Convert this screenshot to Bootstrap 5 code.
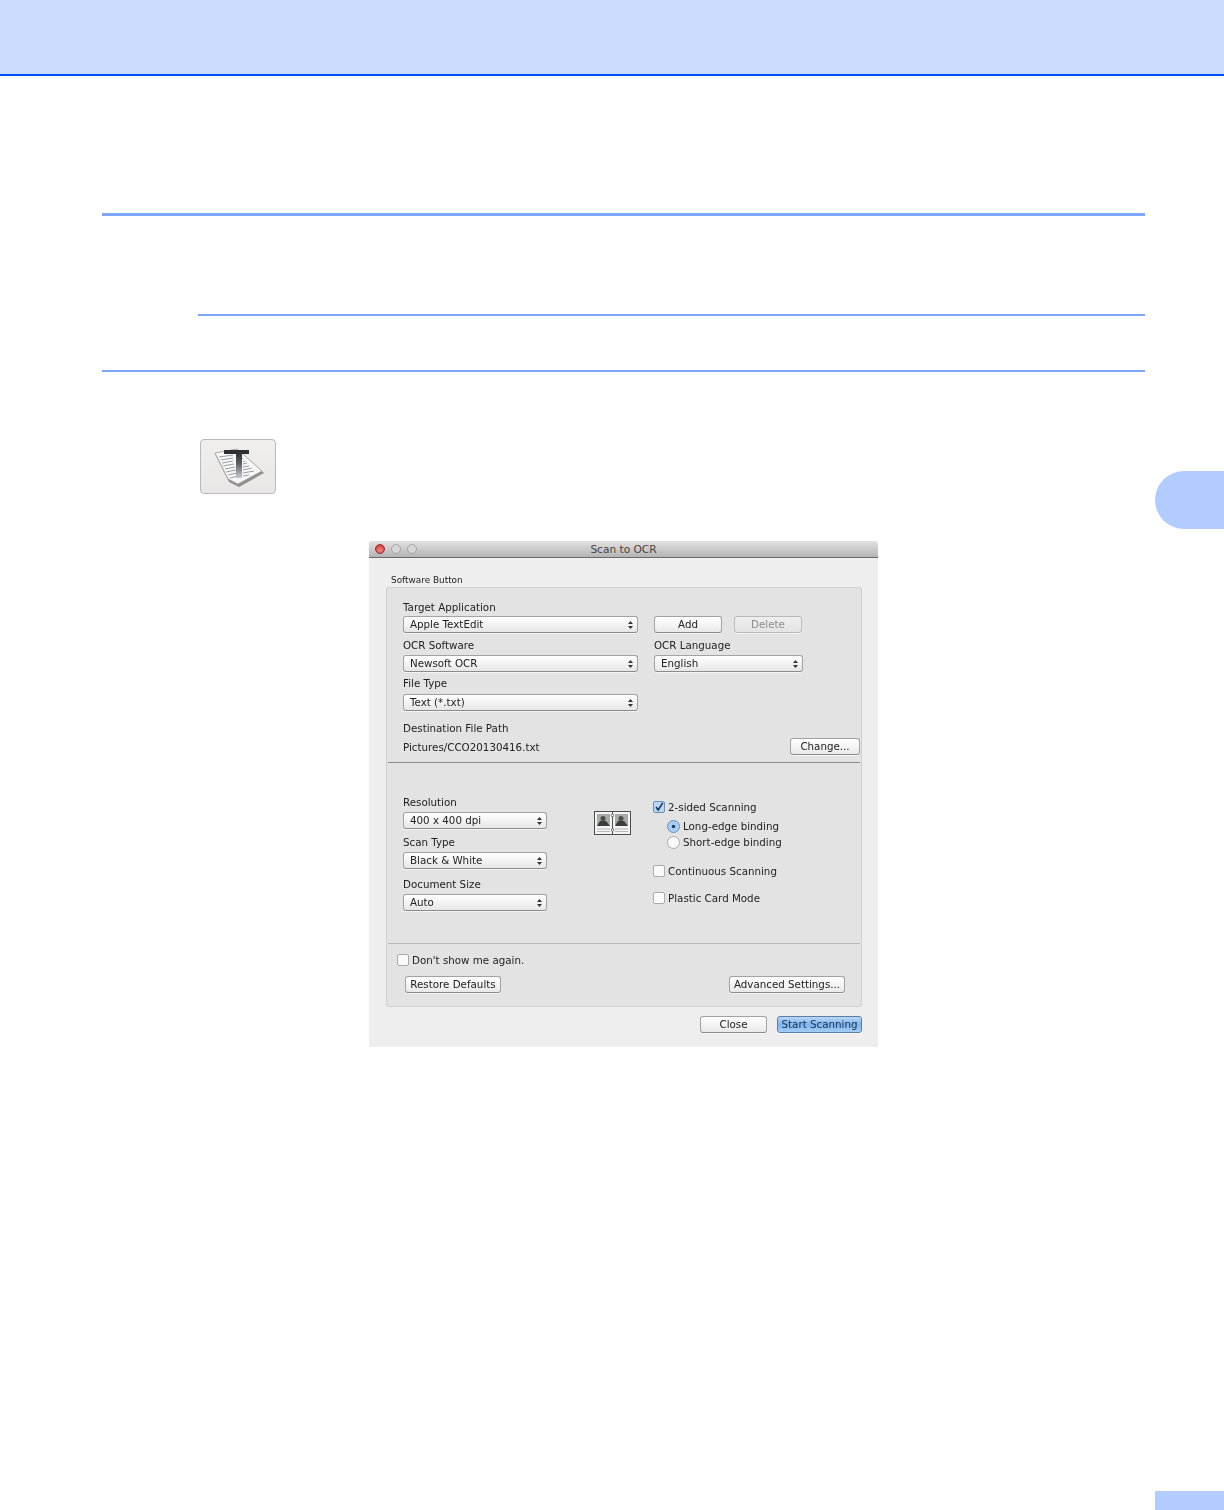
<!DOCTYPE html>
<html lang="en">
<head>
<meta charset="utf-8">
<title>Scan to OCR</title>
<link href="https://cdn.jsdelivr.net/npm/bootstrap@5.3.0/dist/css/bootstrap.min.css" rel="stylesheet">
<style>
html,body{background:#fff;margin:0}
.pg{position:relative;height:1510px;width:1224px;overflow:hidden}
.top-band{height:76px;background:#cbdcff;border-bottom:2px solid #0050ff}
.rule-a{height:3px;background:#7ea8ff;margin:137px 79px 0 102px}
.rule-b{height:2px;background:#7ea8ff;margin:98px 79px 0 198px}
.rule-c{height:2px;background:#7ea8ff;margin:54px 79px 0 102px}
.tool-icon{width:76px;height:55px;margin:67px 0 0 200px;background:linear-gradient(#f1eeee,#e9e6e6);border:1px solid #bdb8b8;border-radius:4px;overflow:hidden}
.tool-icon svg{display:block}
.side-tab{position:absolute;left:1155px;top:471px;width:69px;height:58px;background:#b3ccff;border-radius:29px 0 0 29px}
.page-tab{position:absolute;left:1155px;top:1491px;width:69px;height:19px;background:#b3ccff}

.dlg{width:509px;height:506px;margin:47px 0 0 369px;background:#eeeeee;font-family:"DejaVu Sans",sans-serif;font-size:10.3px;color:#222;filter:blur(.3px);border-radius:3px 3px 0 0;overflow:hidden}
.dlg-title{height:17px;line-height:16px;background:linear-gradient(#e2e2e2,#b4b4b4);border-bottom:1px solid #6a6a6a;text-align:center;color:#444;font-size:10.6px;position:relative}
.lights{left:6px;top:3px;position:absolute;gap:6px}
.light{width:10px;height:10px;border-radius:50%;background:#d5d5d5;border:1px solid #a5a5a5}
.light-red{background:radial-gradient(circle at 50% 70%,#f08a80,#c92b2b);border-color:#9d2a2a}
.group-name{height:13px;line-height:13px;margin:16px 0 0 22px;font-size:8.9px}
.panel{width:476px;height:420px;margin:0 0 0 17px;background:#e3e3e3;border:1px solid #cfcfcf;border-radius:3px;padding:0 1px}
.sec-a{padding:12px 0 0 15px;height:174px}
.sec-b{height:180px;padding-left:15px}
.sec-c{padding:9px 0 0 9px}
.line{height:1px;background:#8e8e8e;margin:0}
.line-soft{background:#b9b9b9}
.cap{height:14px;line-height:14px;white-space:nowrap}
.dlg select.form-select,.dlg .btn{font-size:10.3px;line-height:15px;color:#222;border:1px solid #a2a2a2;border-bottom-color:#8b8b8b;border-radius:3px;height:17px;padding:0;box-shadow:0 1px 0 rgba(255,255,255,.6);font-family:inherit}
.dlg select.form-select{padding:0 16px 0 6px;background-color:#fff;background-image:url("data:image/svg+xml,%3Csvg xmlns='http://www.w3.org/2000/svg' width='7' height='10'%3E%3Cpath d='M3.5 1 1 4h5zM3.5 9 1 6h5z' fill='%23333'/%3E%3C/svg%3E"),linear-gradient(#fff,#f3f3f3 50%,#e6e6e6);background-repeat:no-repeat;background-position:right 3px center,0 0;background-size:7px 10px,100% 100%}
.dlg .btn{background:linear-gradient(#fff,#f4f4f4 50%,#e9e9e9);text-align:center}
.dlg .btn:disabled{opacity:1;color:#8d8d8d;border-color:#b9b9b9;background:linear-gradient(#eeeeee,#e4e4e4)}
.dlg .btn.go{background:linear-gradient(#b9d7f6,#7fb4ee 50%,#a3cdf5);border-color:#5a7ea8;color:#14324f}
.w-235{width:235px}.w-149{width:149px}.w-144{width:144px}
.w-68{width:68px}.w-70{width:70px}.w-96{width:96px}.w-116{width:116px}.w-67{width:67px}.w-85{width:85px}
.g2{margin-top:2px}.g3{margin-top:3px}.g4{margin-top:4px}.g5{margin-top:5px}.g6{margin-top:6px}.g8{margin-top:8px}.g9{margin-top:9px}.g10{margin-top:10px}
.after-sel{margin-left:16px}.after-add{margin-left:12px}
.col-left{width:144px;padding-top:32px}
.col-mid{width:48px;margin-left:44px;padding-top:48px}
.col-right{margin-left:14px;padding-top:37px}
.opt{height:14px;line-height:14px;white-space:nowrap}
.opt .form-check-input{margin:0 3px 0 0;width:12px;height:12px;border:1px solid #ababab;border-radius:2px;background-color:#fafafa;flex:none}
.opt .form-check-input:checked{background-color:#bcd6f2;border-color:#6f8fb5;background-image:url("data:image/svg+xml,%3Csvg xmlns='http://www.w3.org/2000/svg' viewBox='0 0 12 12'%3E%3Cpath d='M2.5 6 5 9.5 10.5 1' fill='none' stroke='%23123a66' stroke-width='2'/%3E%3C/svg%3E");background-size:100% 100%}
.opt .form-check-input[type=radio]{border-radius:50%;width:13px;height:13px}
.opt .form-check-input[type=radio]:checked{background-color:#a9cdf3;background-image:url("data:image/svg+xml,%3Csvg xmlns='http://www.w3.org/2000/svg' viewBox='0 0 13 13'%3E%3Ccircle cx='6.5' cy='6.5' r='2' fill='%23173a60'/%3E%3C/svg%3E")}
.sub-opt{margin-left:14px}
.g15{margin-top:15px}.g13{margin-top:13px}
.sec-c-buttons{margin:9px 0 0 8px;width:440px}
.dlg-foot{margin:9px 16px 0 0;gap:10px}
</style>
</head>
<body>
<div class="pg">
  <div class="top-band"></div>
  <div class="rule-a"></div>
  <div class="rule-b"></div>
  <div class="rule-c"></div>
  <div class="tool-icon">
    <svg width="74" height="53" viewBox="0 0 74 53" aria-hidden="true">
      <defs>
        <linearGradient id="tg" x1="0" y1="0" x2="0" y2="1"><stop offset="0" stop-color="#2c2c30"/><stop offset=".45" stop-color="#5d6068"/><stop offset="1" stop-color="#c8cbd2"/></linearGradient>
      </defs>
      <path d="M14 14 37 10 63 33 38 47 28 42Z" fill="#8f8f8f"/>
      <path d="M14 13 36 9 61 31 37 44 27 39Z" fill="#f7f7f7" stroke="#9a9a9a" stroke-width=".8"/>
      <g stroke="#9c9ea3" stroke-width="1" fill="none">
        <path d="M18 17 32 15M20 20 32 18M21 23 32 21M22 26 33 24M24 29 34 27M25 32 35 30M27 35 36 33M29 38 37 36"/>
        <path d="M42 18 41 19M44 21 42 22M46 23 42 24M48 26 42 27M51 28 42 30M53 31 42 33M48 35 42 36"/>
      </g>
      <rect x="23" y="10" width="25" height="4" fill="#2f2f33"/>
      <rect x="35" y="12" width="6" height="26" fill="url(#tg)"/>
    </svg>
  </div>
  <div class="dlg">
    <div class="dlg-title">
      <div class="lights d-flex"><span class="light light-red"></span><span class="light"></span><span class="light"></span></div>
      Scan to OCR
    </div>
    <div class="group-name">Software Button</div>
    <div class="panel">
      <div class="sec-a">
        <div class="cap">Target Application</div>
        <div class="d-flex g2">
          <select class="form-select w-235"><option>Apple TextEdit</option></select>
          <button class="btn w-68 after-sel" type="button">Add</button>
          <button class="btn w-68 after-add" type="button" disabled>Delete</button>
        </div>
        <div class="d-flex g5">
          <div class="cap w-235">OCR Software</div>
          <div class="cap after-sel">OCR Language</div>
        </div>
        <div class="d-flex g3">
          <select class="form-select w-235"><option>Newsoft OCR</option></select>
          <select class="form-select w-149 after-sel"><option>English</option></select>
        </div>
        <div class="cap g4">File Type</div>
        <div class="g4"><select class="form-select w-235"><option>Text (*.txt)</option></select></div>
        <div class="cap g10">Destination File Path</div>
        <div class="d-flex justify-content-between align-items-center g3 w-436">
          <span class="cap">Pictures/CCO20130416.txt</span>
          <button class="btn w-70 change-btn" type="button">Change...</button>
        </div>
      </div>
      <div class="line"></div>
      <div class="sec-b d-flex">
        <div class="col-left">
          <div class="cap">Resolution</div>
          <select class="form-select w-144 g3"><option>400 x 400 dpi</option></select>
          <div class="cap g6">Scan Type</div>
          <select class="form-select w-144 g3"><option>Black &amp; White</option></select>
          <div class="cap g8">Document Size</div>
          <select class="form-select w-144 g3"><option>Auto</option></select>
        </div>
        <div class="col-mid">
          <svg width="42" height="25" viewBox="0 0 42 25" aria-hidden="true">
            <rect x="3.5" y=".5" width="18" height="23" fill="#f4f4f4" stroke="#4d4d4d"/>
            <rect x="21.5" y=".5" width="18" height="23" fill="#f4f4f4" stroke="#4d4d4d"/>
            <rect x="6" y="3" width="13" height="12" fill="#a7aaa6"/>
            <rect x="24" y="3" width="13" height="12" fill="#a7aaa6"/>
            <circle cx="12" cy="7.5" r="2.5" fill="#4c4c4c"/><circle cx="30" cy="7.5" r="2.5" fill="#4c4c4c"/>
            <path d="M6 15 9 10h6l4 5Z" fill="#3d3d3d"/><path d="M24 15 27 10h6l4 5Z" fill="#3d3d3d"/>
            <path d="M6 18h13M6 20.500h13M24 18h13M24 20.500h13" stroke="#b5b5b5"/>
            <circle cx="21.500" cy="4.500" r="1.300" fill="#fff" stroke="#444" stroke-width=".7"/><circle cx="21.500" cy="19" r="1.300" fill="#fff" stroke="#444" stroke-width=".7"/>
          </svg>
        </div>
        <div class="col-right">
          <label class="opt d-flex align-items-center"><input class="form-check-input" type="checkbox" checked>2-sided Scanning</label>
          <label class="opt d-flex align-items-center sub-opt g5"><input class="form-check-input" type="radio" name="bind" checked>Long-edge binding</label>
          <label class="opt d-flex align-items-center sub-opt g2"><input class="form-check-input" type="radio" name="bind">Short-edge binding</label>
          <label class="opt d-flex align-items-center g15"><input class="form-check-input" type="checkbox">Continuous Scanning</label>
          <label class="opt d-flex align-items-center g13"><input class="form-check-input" type="checkbox">Plastic Card Mode</label>
        </div>
      </div>
      <div class="line line-soft"></div>
      <div class="sec-c">
        <label class="opt d-flex align-items-center"><input class="form-check-input" type="checkbox">Don't show me again.</label>
        <div class="d-flex justify-content-between sec-c-buttons">
          <button class="btn w-96" type="button">Restore Defaults</button>
          <button class="btn w-116" type="button">Advanced Settings...</button>
        </div>
      </div>
    </div>
    <div class="d-flex justify-content-end dlg-foot">
      <button class="btn w-67" type="button">Close</button>
      <button class="btn w-85 go" type="button">Start Scanning</button>
    </div>
  </div>
  <div class="side-tab"></div>
  <div class="page-tab"></div>
</div>
<script src="https://cdn.jsdelivr.net/npm/bootstrap@5.3.0/dist/js/bootstrap.bundle.min.js"></script>
</body>
</html>
